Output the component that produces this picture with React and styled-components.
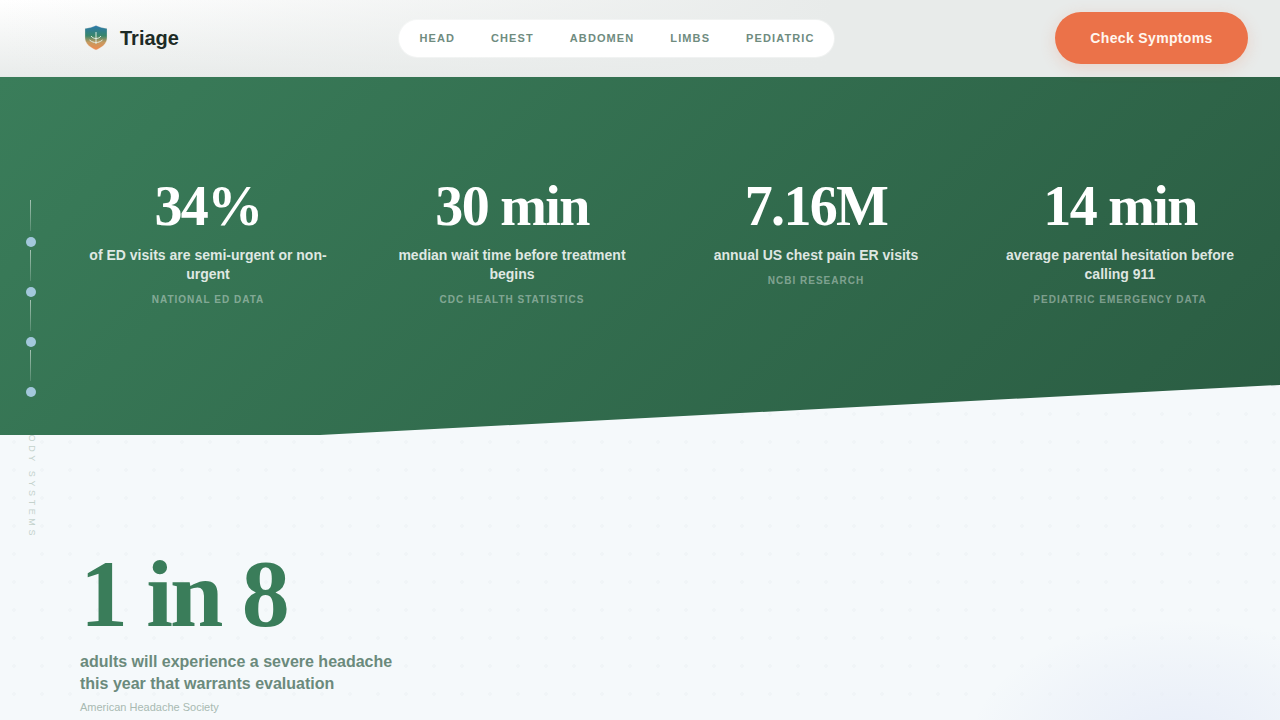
import React from "react";
import styled, { createGlobalStyle } from "styled-components";

const Global = createGlobalStyle`
  html, body { margin: 0; padding: 0; height: 720px; overflow: hidden; }
  body { font-family: "Liberation Sans", Arial, sans-serif; background: #f5f9fb; }
  * { box-sizing: border-box; }
`;

const Page = styled.div`
  position: relative;
  width: 1280px;
  height: 720px;
  overflow: hidden;
  display: flex;
  flex-direction: column;
  background-color: #f5f9fb;
  background-image: radial-gradient(circle at 2px 2px, rgba(120, 135, 150, 0.035) 1.5px, transparent 2px);
  background-size: 28px 28px;
  background-position: 12px 20px;
`;

const Glow = styled.div`
  position: absolute;
  right: -110px;
  bottom: -160px;
  width: 420px;
  height: 260px;
  border-radius: 50%;
  background: radial-gradient(ellipse at center, rgba(228, 234, 248, 0.8) 0%, rgba(234, 239, 248, 0.5) 45%, transparent 72%);
`;

const Header = styled.header`
  position: relative;
  z-index: 3;
  height: 77px;
  flex: none;
  display: flex;
  align-items: center;
  justify-content: space-between;
  padding: 0 32px 0 80px;
  background:
    linear-gradient(to right, rgba(232, 235, 234, 0) 0%, rgba(232, 235, 234, 1) 65%),
    linear-gradient(to bottom, #ffffff 0%, #e9eceb 100%);
  border-bottom: 1px solid #e6eae8;
`;

const Brand = styled.div`
  display: flex;
  align-items: center;
  gap: 8px;
`;

const BrandName = styled.span`
  font-size: 20px;
  font-weight: 700;
  color: #1d2b26;
`;

const Nav = styled.nav`
  display: flex;
  align-items: center;
  gap: 36px;
  height: 37px;
  padding: 0 20px;
  border-radius: 19px;
  background: #ffffff;
  box-shadow: 0 0 0 1px rgba(255, 255, 255, 0.35);
`;

const NavLink = styled.a`
  font-size: 11px;
  font-weight: 700;
  letter-spacing: 1.1px;
  color: #6f8c7f;
`;

const Cta = styled.button`
  width: 193px;
  height: 52px;
  border: 0;
  border-radius: 26px;
  background: #eb7249;
  color: #fff6ef;
  font-family: inherit;
  font-size: 14px;
  font-weight: 700;
  letter-spacing: 0.35px;
  box-shadow: 0 4px 16px rgba(236, 115, 73, 0.2);
`;

const Stats = styled.section`
  position: relative;
  z-index: 1;
  height: 358px;
  flex: none;
  padding: 99px 32px 0 80px;
  display: grid;
  grid-template-columns: repeat(4, 1fr);
  column-gap: 48px;
  align-items: start;
  background: linear-gradient(135deg, #3a7d5a 0%, #2a5c42 100%);
  clip-path: polygon(0 0, 100% 0, 100% 86%, 25% 100%, 0 100%);
`;

const Stat = styled.div`
  text-align: center;
`;

const StatValue = styled.div`
  font-family: "Liberation Serif", "Times New Roman", serif;
  font-size: 56px;
  font-weight: 700;
  line-height: 60px;
  letter-spacing: -1.68px;
  color: #ffffff;
`;

const StatLabel = styled.div`
  margin-top: 10px;
  font-size: 14px;
  font-weight: 600;
  line-height: 19px;
  color: rgba(255, 255, 255, 0.85);
`;

const StatSource = styled.div`
  margin-top: 9px;
  font-size: 10px;
  font-weight: 600;
  line-height: 14px;
  letter-spacing: 1px;
  text-transform: uppercase;
  color: rgba(255, 255, 255, 0.4);
`;

const Lower = styled.section`
  position: relative;
  flex: 1;
  padding: 111px 0 0 80px;
`;

const BigFigure = styled.div`
  font-family: "Liberation Serif", "Times New Roman", serif;
  font-size: 96px;
  font-weight: 700;
  line-height: 96px;
  letter-spacing: -2.88px;
  color: #3a7d5a;
`;

const BigLabel = styled.p`
  margin: 9px 0 0;
  width: 340px;
  font-size: 16px;
  font-weight: 600;
  line-height: 22.4px;
  color: #6b8a7c;
`;

const BigSource = styled.div`
  margin-top: 3px;
  font-size: 11px;
  line-height: 16px;
  color: #a8bab2;
`;

const RailLabel = styled.div`
  position: absolute;
  z-index: 0;
  left: 26px;
  top: 425px;
  writing-mode: vertical-rl;
  font-size: 9px;
  line-height: 12px;
  letter-spacing: 3.6px;
  white-space: nowrap;
  color: #c4d2cc;
`;

const Rail = styled.div`
  position: absolute;
  z-index: 2;
  left: 26px;
  top: 200px;
  width: 10px;
  display: flex;
  flex-direction: column;
`;

const RailLine = styled.span`
  width: 1px;
  height: 31px;
  margin: 0 0 6px 4px;
  background: linear-gradient(to bottom, rgba(255, 255, 255, 0.55), rgba(255, 255, 255, 0.15));
`;

const RailDot = styled.span`
  width: 10px;
  height: 10px;
  border-radius: 50%;
  margin-bottom: 3px;
  background: #a3c8dc;
`;

const Shield = () => (
  <svg width="32" height="32" viewBox="0 0 32 32" aria-hidden="true">
    <defs>
      <linearGradient id="shieldFill" x1="0" y1="0" x2="0" y2="1">
        <stop offset="0" stopColor="#2a78ad" />
        <stop offset="0.42" stopColor="#38866a" />
        <stop offset="0.68" stopColor="#c59a60" />
        <stop offset="1" stopColor="#f0894f" />
      </linearGradient>
      <filter id="soft" x="-10%" y="-10%" width="120%" height="120%">
        <feGaussianBlur stdDeviation="0.55" />
      </filter>
    </defs>
    <g filter="url(#soft)">
      <path d="M5 6.500 C9 6 12.500 5 16 3.500 C19.500 5 23 6 27 6.500 V16 C27 21.500 22 25.500 16 28 C10 25.500 5 21.500 5 16 Z" fill="url(#shieldFill)" stroke="#f3e6d8" strokeOpacity="0.5" strokeWidth="0.6" />
      <path d="M16 10 V22 M11 14 C12.500 16 14.500 16.500 16 16.500 C17.500 16.500 19.500 16 21 14 M9.500 18 C12 20 14 20.500 16 20.500 C18 20.500 20 20 22.500 18" fill="none" stroke="#dfeadf" strokeWidth="1" />
    </g>
  </svg>
);

const stats = [
  ["34%", "of ED visits are semi-urgent or non-urgent", "National ED Data"],
  ["30 min", "median wait time before treatment begins", "CDC Health Statistics"],
  ["7.16M", "annual US chest pain ER visits", "NCBI Research"],
  ["14 min", "average parental hesitation before calling 911", "Pediatric Emergency Data"],
];

const links = ["HEAD", "CHEST", "ABDOMEN", "LIMBS", "PEDIATRIC"];

export default function App() {
  return (
    <Page>
      <Global />
      <Glow />
      <Header>
        <Brand>
          <Shield />
          <BrandName>Triage</BrandName>
        </Brand>
        <Nav>
          {links.map((l) => (
            <NavLink key={l}>{l}</NavLink>
          ))}
        </Nav>
        <Cta>Check Symptoms</Cta>
      </Header>
      <Stats>
        {stats.map(([v, l, s]) => (
          <Stat key={v}>
            <StatValue>{v}</StatValue>
            <StatLabel>{l}</StatLabel>
            <StatSource>{s}</StatSource>
          </Stat>
        ))}
      </Stats>
      <Lower>
        <BigFigure>1 in 8</BigFigure>
        <BigLabel>adults will experience a severe headache this year that warrants evaluation</BigLabel>
        <BigSource>American Headache Society</BigSource>
      </Lower>
      <RailLabel>BODY SYSTEMS</RailLabel>
      <Rail>
        <RailLine />
        <RailDot />
        <RailLine />
        <RailDot />
        <RailLine />
        <RailDot />
        <RailLine />
        <RailDot />
      </Rail>
    </Page>
  );
}
